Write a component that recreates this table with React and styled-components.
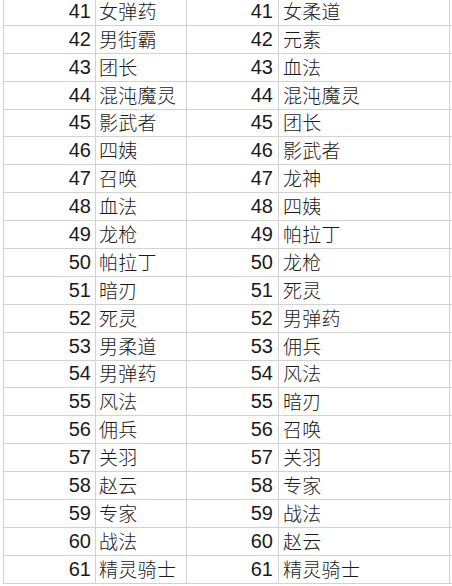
import React from 'react'
import styled, { createGlobalStyle } from 'styled-components'

const GlobalStyle = createGlobalStyle`
  html, body {
    margin: 0;
    padding: 0;
    background: #fff;
    overflow: hidden;
  }
`

// two lists side by side, row numbers 41..61
const left = [
  '女弹药', '男街霸', '团长', '混沌魔灵', '影武者', '四姨', '召唤',
  '血法', '龙枪', '帕拉丁', '暗刃', '死灵', '男柔道', '男弹药',
  '风法', '佣兵', '关羽', '赵云', '专家', '战法', '精灵骑士'
]

const right = [
  '女柔道', '元素', '血法', '混沌魔灵', '团长', '影武者', '龙神',
  '四姨', '帕拉丁', '龙枪', '死灵', '男弹药', '佣兵', '风法',
  '暗刃', '召唤', '关羽', '专家', '战法', '赵云', '精灵骑士'
]

const Sheet = styled.div`
  margin-top: -2px;
  margin-left: 3px;
  border-left: 1px solid #d2d2d2;
  width: 460px;
  font-family: "Liberation Sans", "Noto Sans CJK SC", sans-serif;
  font-size: 20px;
  color: #1a1a1a;
`

const Row = styled.div`
  display: grid;
  grid-template-columns: 92px 91px 92px 171px 20px;
  height: 27.9px;
  border-bottom: 1px solid #d2d2d2;
  box-sizing: border-box;
`

const Cell = styled.div`
  display: flex;
  align-items: flex-end;
  justify-content: ${props => props.num ? 'flex-end' : 'flex-start'};
  padding: 0 ${props => props.pr || 0}px 2px ${props => props.pl || 0}px;
  border-right: 1px solid #d2d2d2;
  box-sizing: border-box;
  white-space: nowrap;
  line-height: 24px;
  overflow: hidden;
`

const Name = styled.span`
  font-family: "Noto Sans CJK SC", sans-serif;
  font-weight: 300;
  font-size: 19px;
  letter-spacing: 0.3px;
`

export default function App () {
  return (
    <>
      <GlobalStyle />
      <Sheet>
        {left.map((name, i) => (
          <Row key={i}>
            <Cell num pr={4}>{41 + i}</Cell>
            <Cell pl={3}><Name>{name}</Name></Cell>
            <Cell num pr={5}>{41 + i}</Cell>
            <Cell pl={4}><Name>{right[i]}</Name></Cell>
            <Cell />
          </Row>
        ))}
      </Sheet>
    </>
  )
}
